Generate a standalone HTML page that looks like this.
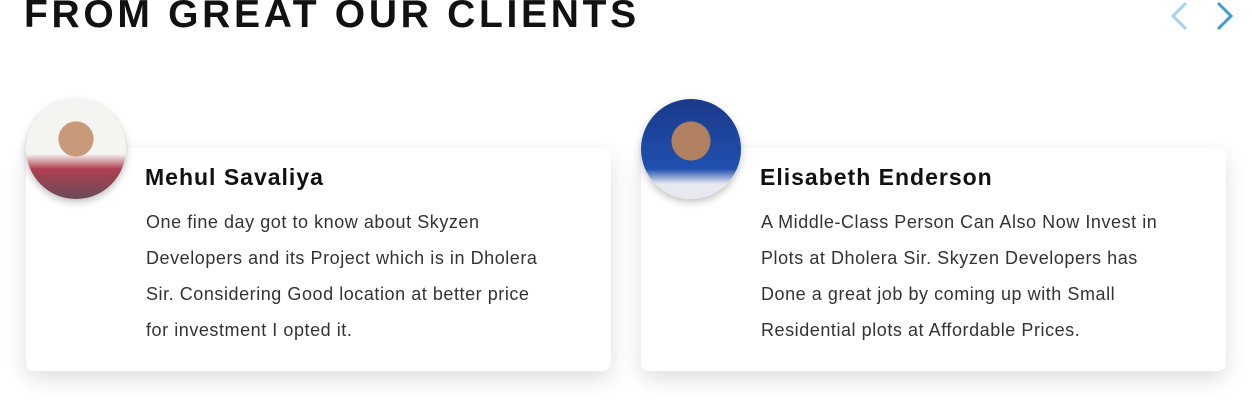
<!DOCTYPE html>
<html><head><style>
body{margin:0;width:1252px;height:407px;background:#fff;font-family:"Liberation Sans",sans-serif;overflow:hidden;position:relative}
h1{position:absolute;left:24px;top:-7px;margin:0;font-size:39px;font-weight:700;letter-spacing:3.7px;color:#111;white-space:nowrap}
.card{position:absolute;top:148px;width:585px;height:223px;background:#fff;border-radius:8px;box-shadow:0 8px 22px rgba(0,0,0,.13)}
.av{position:absolute;top:99px;width:100px;height:100px;border-radius:50%;box-shadow:0 3px 8px rgba(0,0,0,.25);overflow:hidden}
.name{position:absolute;left:119px;top:16px;font-size:23px;font-weight:600;color:#111;letter-spacing:1px}
.txt{position:absolute;left:120px;top:56px;width:460px;font-size:18px;letter-spacing:.55px;line-height:36px;color:#333;white-space:nowrap}
</style></head><body>
<h1>FROM GREAT OUR CLIENTS</h1>
<svg style="position:absolute;left:1168px;top:0" width="70" height="32"><path d="M18 3 L5 16 L18 29" stroke="#a6d2ea" stroke-width="3" fill="none"/><path d="M50 3 L63 16 L50 29" stroke="#3f9dd0" stroke-width="3" fill="none"/></svg>
<div class="card" style="left:26px"><div class="name">Mehul Savaliya</div><div class="txt">One fine day got to know about Skyzen<br>Developers and its Project which is in Dholera<br>Sir. Considering Good location at better price<br>for investment I opted it.</div></div>
<div class="card" style="left:641px"><div class="name">Elisabeth Enderson</div><div class="txt">A Middle-Class Person Can Also Now Invest in<br>Plots at Dholera Sir. Skyzen Developers has<br>Done a great job by coming up with Small<br>Residential plots at Affordable Prices.</div></div>
<div class="av" style="left:26px;background:radial-gradient(circle at 50% 40%,#c89a7a 0 22%,transparent 23%),linear-gradient(#f4f4f0 0 55%,#b04050 70%,#6a4a5a 100%)"></div>
<div class="av" style="left:641px;background:radial-gradient(circle at 50% 42%,#b08060 0 25%,transparent 26%),linear-gradient(#1a3a8a,#2050b0 70%,#e8e8f0 85%)"></div>
</body></html>
